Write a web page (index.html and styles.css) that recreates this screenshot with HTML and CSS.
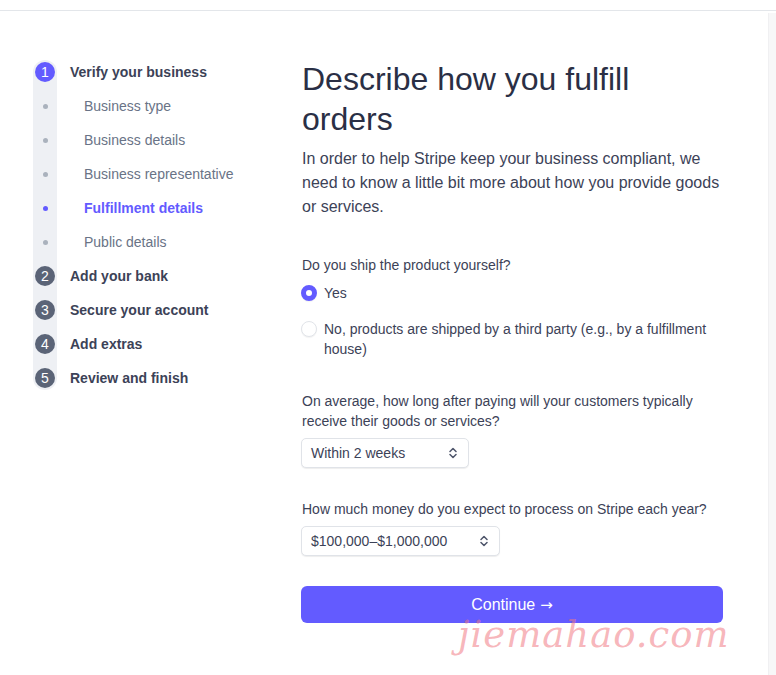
FILE: index.html
```html
<!DOCTYPE html>
<html lang="en">
<head>
<meta charset="utf-8">
<title>Describe how you fulfill orders</title>
<link rel="stylesheet" href="styles.css">
</head>
<body>
<div class="topbar"></div>
<div class="page">
  <div class="content">
    <nav class="sidebar">
      <ul class="steps">
        <li class="step major current"><span class="marker"><span class="num">1</span></span><span class="label">Verify your business</span></li>
        <li class="step sub"><span class="marker"><span class="dot"></span></span><span class="label">Business type</span></li>
        <li class="step sub"><span class="marker"><span class="dot"></span></span><span class="label">Business details</span></li>
        <li class="step sub"><span class="marker"><span class="dot"></span></span><span class="label">Business representative</span></li>
        <li class="step sub active"><span class="marker"><span class="dot"></span></span><span class="label">Fulfillment details</span></li>
        <li class="step sub"><span class="marker"><span class="dot"></span></span><span class="label">Public details</span></li>
        <li class="step major"><span class="marker"><span class="num">2</span></span><span class="label">Add your bank</span></li>
        <li class="step major"><span class="marker"><span class="num">3</span></span><span class="label">Secure your account</span></li>
        <li class="step major"><span class="marker"><span class="num">4</span></span><span class="label">Add extras</span></li>
        <li class="step major"><span class="marker"><span class="num">5</span></span><span class="label">Review and finish</span></li>
      </ul>
    </nav>
    <main class="main">
      <h1 class="title">Describe how you fulfill orders</h1>
      <p class="intro">In order to help Stripe keep your business compliant, we need to know a little bit more about how you provide goods or services.</p>

      <div class="field">
        <div class="question">Do you ship the product yourself?</div>
        <div class="radios">
          <div class="radio-row"><span class="radio checked"></span><span class="radio-label">Yes</span></div>
          <div class="radio-row"><span class="radio"></span><span class="radio-label">No, products are shipped by a third party (e.g., by a fulfillment house)</span></div>
        </div>
      </div>

      <div class="field field-select">
        <div class="question">On average, how long after paying will your customers typically receive their goods or services?</div>
        <div class="select select-short"><span>Within 2 weeks</span>
          <svg class="chev" width="8" height="12" viewBox="0 0 8 12"><path d="M1 4.5 L4 1.5 L7 4.5 M1 7.5 L4 10.5 L7 7.5" fill="none" stroke="#4f566b" stroke-width="1.5" stroke-linecap="round" stroke-linejoin="round"/></svg>
        </div>
      </div>

      <div class="field field-select">
        <div class="question">How much money do you expect to process on Stripe each year?</div>
        <div class="select select-long"><span>$100,000–$1,000,000</span>
          <svg class="chev" width="8" height="12" viewBox="0 0 8 12"><path d="M1 4.5 L4 1.5 L7 4.5 M1 7.5 L4 10.5 L7 7.5" fill="none" stroke="#4f566b" stroke-width="1.5" stroke-linecap="round" stroke-linejoin="round"/></svg>
        </div>
      </div>

      <button class="continue" type="button">Continue <span class="arrow">→</span></button>
    </main>
  </div>
  <div class="scrolltrack"></div>
</div>
<div class="watermark">jiemahao.com</div>
</body>
</html>
```
FILE: styles.css
```css
* { box-sizing: border-box; }
html, body { margin: 0; padding: 0; background: #ffffff; }
body {
  font-family: "Liberation Sans", Arial, sans-serif;
  color: #3c4257;
  width: 776px;
  height: 675px;
  overflow: hidden;
  position: relative;
}
.topbar {
  height: 11px;
  border-bottom: 1px solid #e3e6ea;
}
.page {
  display: flex;
  height: 664px;
}
.content {
  flex: 1;
  display: flex;
  padding: 44px 0 0 33px;
}
.scrolltrack {
  width: 8px;
  margin-top: 2px;
  background: #f7f7f8;
  border-left: 1px solid #f0f0f2;
}
.sidebar {
  width: 269px;
  flex: none;
}
.steps {
  list-style: none;
  margin: 0;
  padding: 0;
  position: relative;
}
.steps::before {
  content: "";
  position: absolute;
  left: 0;
  top: 5px;
  bottom: 5px;
  width: 24px;
  border-radius: 12px;
  background: #eef0f4;
}
.step {
  position: relative;
  display: flex;
  align-items: center;
  height: 34px;
  font-size: 14px;
}
.marker {
  width: 24px;
  flex: none;
  display: flex;
  justify-content: center;
  align-items: center;
}
.num {
  width: 20px;
  height: 20px;
  border-radius: 50%;
  background: #5b6477;
  color: #ffffff;
  font-size: 14px;
  line-height: 20px;
  text-align: center;
}
.current .num { background: #635bff; }
.dot {
  width: 5px;
  height: 5px;
  border-radius: 50%;
  background: #aab2bd;
}
.active .dot { background: #635bff; }
.major .label {
  margin-left: 13px;
  font-weight: bold;
  color: #3c4257;
}
.sub .label {
  margin-left: 27px;
  color: #697386;
}
.sub.active .label {
  color: #635bff;
  font-weight: bold;
}
.main {
  width: 421px;
  flex: none;
  padding-top: 4px;
}
.title {
  margin: 0 0 8px;
  font-size: 32px;
  line-height: 40px;
  font-weight: normal;
  color: #2a2f45;
}
.intro {
  margin: 0;
  font-size: 16px;
  line-height: 24px;
  color: #3c4257;
}
.field { margin-top: 36px; }
.field-select { margin-top: 32px; }
.field-select + .field-select { margin-top: 31px; }
.question {
  font-size: 14px;
  line-height: 20px;
  color: #3c4257;
}
.radios {
  display: flex;
  flex-direction: column;
  gap: 16px;
  margin-top: 8px;
}
.radio-row {
  display: flex;
  align-items: flex-start;
  gap: 7px;
  font-size: 14px;
  line-height: 20px;
  color: #3c4257;
}
.radio {
  width: 16px;
  height: 16px;
  border-radius: 50%;
  flex: none;
  margin-top: 2px;
  margin-left: -1px;
  border: 1px solid #e1e4e9;
  background: #ffffff;
  box-shadow: 0 1px 1px rgba(0,0,0,0.05);
}
.radio.checked {
  border: 5px solid #635bff;
  background: #ffffff;
}
.radio-label { width: 400px; }
.select {
  margin-top: 7px;
  margin-left: -1px;
  height: 30px;
  display: flex;
  align-items: center;
  justify-content: space-between;
  padding: 0 11px 0 9px;
  font-size: 14px;
  color: #3c4257;
  background: #ffffff;
  border: 1px solid #e0e3e8;
  border-radius: 5px;
  box-shadow: 0 1px 1px rgba(0,0,0,0.07);
}
.select-short { width: 168px; }
.select-long { width: 199px; }
.continue {
  margin-top: 30px;
  margin-left: -1px;
  width: 422px;
  height: 37px;
  border: none;
  border-radius: 6px;
  background: #635bff;
  color: #ffffff;
  font-family: "Liberation Sans", Arial, sans-serif;
  font-size: 16px;
  display: flex;
  align-items: center;
  justify-content: center;
  gap: 5px;
  padding: 0;
}
.arrow { font-family: "DejaVu Sans", sans-serif; font-size: 15px; }
.watermark {
  position: absolute;
  left: 458px;
  top: 616px;
  font-family: "DejaVu Serif", serif;
  font-style: italic;
  font-size: 37px;
  line-height: 1;
  color: rgba(240, 120, 130, 0.55);
  letter-spacing: 1px;
  pointer-events: none;
}
```
